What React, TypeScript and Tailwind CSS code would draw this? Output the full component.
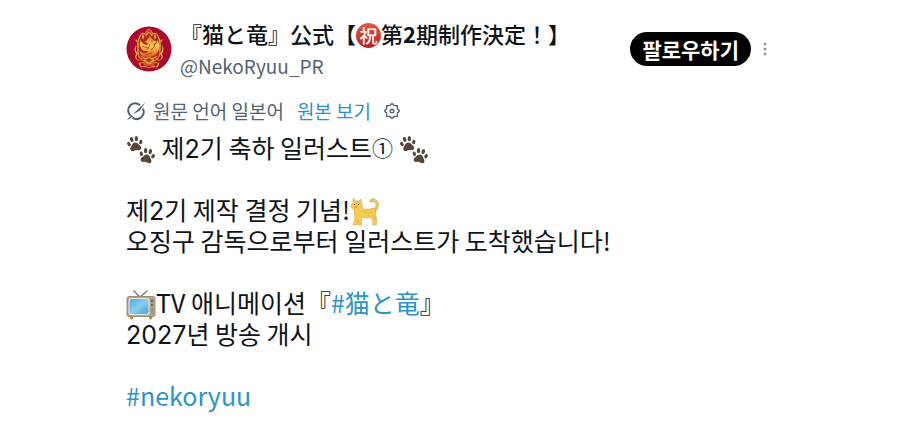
import React from 'react';

const KR = "font-['Noto_Sans_CJK_KR',sans-serif]";
const JP = "font-['Noto_Sans_CJK_JP',sans-serif]";

function Avatar() {
  return (
    <svg viewBox="0 0 46 46" className="size-[46px] shrink-0" role="img" aria-label="NekoRyuu">
      <defs>
        <linearGradient id="gold" x1="0" y1="0" x2="0" y2="1">
          <stop offset="0" stopColor="#d07a2c" />
          <stop offset="0.45" stopColor="#f8cf4c" />
          <stop offset="1" stopColor="#d4661f" />
        </linearGradient>
      </defs>
      <circle cx="23" cy="23" r="22.5" fill="#a80a2c" />
      <path d="M14 10L19 7L23 4L27 7L32 10L34 15V28Q33 34 23 38Q13 34 12 28V15Z" fill="#b52a26" />
      <g fill="none" stroke="url(#gold)" strokeLinecap="round" strokeLinejoin="round">
        <path d="M14 10Q16 6 19 8Q21 4 23 3Q25 4 27 8Q30 6 32 10L34 15V28Q33 34 23 38Q13 34 12 28V15Z" strokeWidth="1.2" />
        <path d="M17 12V9M20 9L23 6L26 9M29 9V12M12 17L10 14M34 17L36 14" strokeWidth="1.4" />
        <path d="M10 20Q8 24 11 28Q8 32 12 34Q15 35 16 32M36 20Q38 24 35 28Q38 32 34 34Q31 35 30 32" strokeWidth="1.3" />
        <path d="M13 37Q18 36 23 38Q28 36 33 37L31 41Q27 40 23 42Q19 40 15 41Z" strokeWidth="1.2" />
        <path d="M18 34L23 37L28 34M18 39H28M15 30L20 33L23 31L26 33L31 30" strokeWidth="1.3" />
      </g>
      <path
        d="M21 14L24 10L26 13L31 16L28 18L27 21Q30 19 32 14Q35 22 31 27Q28 31 22 31Q15 31 13 25L17 27Q21 28 22 25L18 25Q13 23 14 14Q18 19 21 19L22 17L19 16Z"
        fill="url(#gold)"
      />
      <path d="M25 15L27 15M16 20L22 22M25 24L29 20M19 29L26 27M24 18L22 23" stroke="#a5361d" strokeWidth="0.8" />
    </svg>
  );
}

function Congrats() {
  return (
    <span className={`mt-1 inline-flex size-[25px] items-center justify-center rounded-full bg-linear-to-b from-[#e0574b] to-[#b91f1c] text-[18px] leading-none font-medium text-white ${JP}`}>
      祝
    </span>
  );
}

function Paw({ transform }: { transform: string }) {
  return (
    <g transform={transform} fill="#57463a">
      <ellipse cx="-6" cy="-1" rx="1.6" ry="2.3" transform="rotate(-25 -6 -1)" />
      <ellipse cx="-2.5" cy="-5" rx="1.7" ry="2.6" transform="rotate(-8 -2.5 -5)" />
      <ellipse cx="2.3" cy="-5" rx="1.7" ry="2.6" transform="rotate(8 2.3 -5)" />
      <ellipse cx="6" cy="-1" rx="1.6" ry="2.3" transform="rotate(25 6 -1)" />
      <path d="M0-1.5Q2.5-1.5 3.5 1Q6 3 5.5 5.5Q4 7.5 1.5 6.3Q0 5.8-1.5 6.3Q-4 7.5-5.5 5.5Q-6 3-3.5 1Q-2.5-1.5 0-1.5Z" />
    </g>
  );
}

const emoji = "-my-1 inline-block size-[30px] align-[-3px]";

function Paws() {
  return (
    <svg viewBox="0 0 30 30" className={emoji} role="img" aria-label="발자국">
      <Paw transform="translate(9 9) rotate(-10)" />
      <Paw transform="translate(21 21) rotate(12)" />
    </svg>
  );
}

function Cat() {
  return (
    <svg viewBox="0 0 30 30" className={emoji} role="img" aria-label="고양이">
      <path d="M22 13Q27 14 27 9Q28 6 25.5 4Q23 2 21 4" fill="none" stroke="#c99a3c" strokeWidth="2.8" strokeLinecap="round" />
      <path d="M22 13Q27 14 27 9Q28 6 25.5 4Q23 2 21 4" fill="none" stroke="#f3cb52" strokeWidth="1.7" strokeLinecap="round" />
      <path d="M3 1.5L6 4H9L11 2L12 8L13 12Q18 13 24 11Q27 14 25.5 18L26.5 22V28H23L22.5 23L20 20Q16 22 12 20L11.5 23V28H8L8.5 23L6.5 28H3L5 21Q4 16 4 12Q0 11 1 8L3 6Z" fill="#f6cc4d" stroke="#cda144" strokeWidth="0.5" strokeLinejoin="round" />
      <path d="M15 13.5V17M18 13.5V17M21 13V16M7 5V7M24 18L25 23" stroke="#dfa63a" strokeWidth="0.8" />
      <circle cx="4.5" cy="7.5" r="0.6" fill="#4b3a24" />
      <circle cx="8.5" cy="7.5" r="0.6" fill="#4b3a24" />
      <path d="M5 10H7" stroke="#a4652c" strokeWidth="0.7" />
    </svg>
  );
}

function Television() {
  return (
    <svg viewBox="0 0 30 30" className={emoji} role="img" aria-label="텔레비전">
      <defs>
        <linearGradient id="screen" x1="0" y1="0" x2="1" y2="1">
          <stop offset="0" stopColor="#4fa9d8" />
          <stop offset="0.5" stopColor="#8acdf0" />
          <stop offset="1" stopColor="#499fce" />
        </linearGradient>
      </defs>
      <path d="M8 1L14 7L21 1" fill="none" stroke="#77736e" strokeWidth="1.3" strokeLinecap="round" />
      <path d="M4 25L5 29H6.5L7 25M23 25L24 29H25.5L26 25" fill="#c18d43" stroke="#b78340" />
      <rect x="1" y="6.5" width="28" height="20" rx="2" fill="#b8a58b" stroke="#a18a6c" />
      <rect x="2.5" y="8" width="21" height="17" rx="3" fill="#e1e8e8" />
      <rect x="3.5" y="9" width="19" height="15" rx="3" fill="url(#screen)" />
      <circle cx="26" cy="11" r="1.4" fill="#6c655b" />
      <circle cx="26" cy="15" r="1.2" fill="#6c655b" />
      <path d="M25 19H27.5M25 21H27.5M25 23H27.5" stroke="#807461" strokeWidth="0.8" />
    </svg>
  );
}

function GrokMark() {
  return (
    <svg viewBox="0 0 20 20" className="size-5" fill="none" stroke="#536471" strokeWidth="2" aria-hidden="true">
      <path d="M14 4.3A7 7 0 0 0 4.3 14.4" />
      <path d="M16.7 7.5A7 7 0 0 1 6.5 16.6" />
      <path d="M7 13L19.5 1L13.5 10Z" fill="#536471" stroke="none" />
      <path d="M5 13.5Q4 16.5 1 19Q4.5 17.5 7 15.5Z" fill="#536471" stroke="none" />
    </svg>
  );
}

function Gear() {
  return (
    <svg viewBox="0 0 18 18" className="size-[18px]" fill="none" stroke="#536471" strokeWidth="1.4" strokeLinejoin="round" aria-hidden="true">
      <path d="M9 1.5L11.2 3.6L14.3 3.7L14.4 6.8L16.5 9L14.4 11.2L14.3 14.3L11.2 14.4L9 16.5L6.8 14.4L3.7 14.3L3.6 11.2L1.5 9L3.6 6.8L3.7 3.7L6.8 3.6Z" />
      <circle cx="9" cy="9" r="1.8" />
    </svg>
  );
}

function Digits({ children }: { children: React.ReactNode }) {
  return <span className="font-['Inter',sans-serif] leading-none">{children}</span>;
}

export default function App() {
  return (
    <article className={`bg-white pt-4 pr-[129px] pb-2 pl-[126px] text-[#0f1419] ${KR}`}>
      <header className="flex items-center gap-2">
        <Avatar />
        <div className={`min-w-0 flex-1 whitespace-nowrap ${JP}`}>
          <h1 className="flex h-[34px] items-center text-[22px] leading-8 font-medium">
            『猫と竜』公式【<Congrats />第<span className="font-bold">2</span>期制作決定！】
          </h1>
          <p className="text-[19px] leading-8 text-[#536471]">@NekoRyuu_PR</p>
        </div>
        <div className="flex items-center gap-2">
          <button type="button" className="h-[34px] rounded-full bg-black px-3 text-[21px] leading-7 font-bold whitespace-nowrap text-white">
            팔로우하기
          </button>
          <button type="button" aria-label="더 보기" className="flex w-3 justify-center">
            <svg viewBox="0 0 4 16" className="h-4 w-1" fill="#929ba2" aria-hidden="true">
              <circle cx="2" cy="3" r="1.5" />
              <circle cx="2" cy="8" r="1.5" />
              <circle cx="2" cy="13" r="1.5" />
            </svg>
          </button>
        </div>
      </header>

      <div className="mt-[15px] flex h-7 items-center text-[19px] leading-7 text-[#536471]">
        <GrokMark />
        <span className="ml-[7px]">원문 언어 일본어</span>
        <button type="button" className="ml-[13px] text-[#2a94c6]">원본 보기</button>
        <button type="button" aria-label="번역 설정" className="ml-3"><Gear /></button>
      </div>

      <div className="mt-[7px] text-[25px] leading-[31px]">
        <p><Paws /> 제<Digits>2</Digits>기 축하 일러스트<span className="align-[2px] text-[21px] leading-none">①</span> <Paws /></p>
        <p className="mt-[31px]">제<Digits>2</Digits>기 제작 결정 기념!<Cat /></p>
        <p>오징구 감독으로부터 일러스트가 도착했습니다!</p>
        <p className="mt-[31px]"><Television />TV 애니메이션<span className={JP}>『<a href="#neko" className="text-[#2a94c6]">#猫と竜</a>』</span></p>
        <p><Digits>2027</Digits>년 방송 개시</p>
        <p className="mt-[31px]"><a href="#nekoryuu" className="text-[#2a94c6]">#nekoryuu</a></p>
      </div>
    </article>
  );
}
